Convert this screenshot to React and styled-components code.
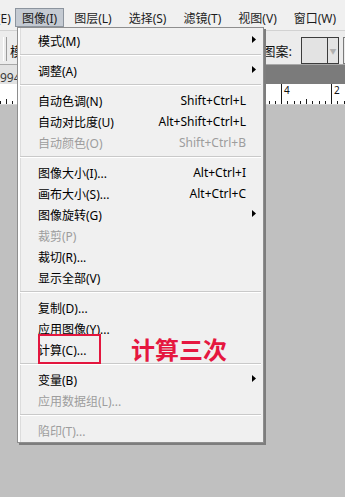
import styled, { createGlobalStyle } from 'styled-components';

const GlobalStyle = createGlobalStyle`
  html, body { margin: 0; padding: 0; }
  body {
    background: #c0c0c0;
    font-family: "Noto Sans", "Noto Sans CJK SC", sans-serif;
    font-size: 12px;
  }
`;

const Window = styled.div`
  position: relative;
  width: 345px;
  height: 497px;
  overflow: hidden;
  background: #c0c0c0;
  display: flex;
  flex-direction: column;
`;

const MenuBar = styled.div`
  height: 31px;
  box-sizing: border-box;
  padding-top: 8px;
  display: flex;
  align-items: flex-start;
  gap: 3px;
  background: #f0f0f0;
  border-bottom: 1px solid #d2d2d2;
  white-space: nowrap;
`;

const MenuTitle = styled.div`
  height: 19px;
  box-sizing: border-box;
  padding: 0 6px;
  display: flex;
  align-items: center;
  color: #1c1c1c;
  border: 1px solid ${(p) => (p.$open ? '#8c949e' : 'transparent')};
  background: ${(p) => (p.$open ? '#c4cad2' : 'transparent')};

  &:first-child {
    margin-left: -34px;
    padding-right: 0;
  }
`;

const OptionsBar = styled.div`
  height: 34px;
  box-sizing: border-box;
  padding: 6px 0 0 3px;
  display: flex;
  align-items: center;
  background: #ececec;
  border-bottom: 1px solid #a8a8a8;
  overflow: hidden;
  white-space: nowrap;
`;

const Grip = styled.div`
  width: 2px;
  height: 24px;
  margin-top: -4px;
  border-left: 1px solid #ffffff;
  border-right: 1px solid #9c9c9c;
  margin-right: 3px;
`;

const OptionLabel = styled.span`
  font-size: 13px;
  color: #111;
  margin-left: ${(p) => (p.$push ? 'auto' : '0')};
  margin-right: ${(p) => p.$gap || 0}px;
`;

const PatternBox = styled.div`
  width: 38px;
  height: 27px;
  box-sizing: border-box;
  display: flex;
  border: 1px solid #3c3c3c;
  background: #e3e3e3;
  margin-right: 4px;
`;

const PatternSwatch = styled.div`
  flex: 1;
`;

const PatternDrop = styled.div`
  width: 10px;
  border-left: 1px solid #3c3c3c;
  display: flex;
  align-items: center;
  justify-content: center;
  color: #b0b0b0;
  font-size: 7px;
`;

const EdgeBox = styled.div`
  width: 10px;
  height: 27px;
  box-sizing: border-box;
  border: 1px solid #7a7a7a;
  border-right: none;
  margin-right: -8px;
`;

const TabBar = styled.div`
  height: 19px;
  display: flex;
  background: #7b7b7b;
`;

const DocTab = styled.div`
  padding: 6px 4px 0 0;
  background: #e2e2e2;
  color: #3a3a3a;
  line-height: 13px;
  white-space: nowrap;
`;

const Ruler = styled.div`
  height: 20px;
  background: #ffffff;
  border-bottom: 1px solid #d4d4d4;

  svg { display: block; }
`;

const Canvas = styled.div`
  flex: 1;
  background: #c0c0c0;
`;

const Menu = styled.div`
  position: absolute;
  left: 17px;
  top: 27px;
  width: 247px;
  box-sizing: border-box;
  padding: 2px 0 1px;
  border: 1px solid #8e8e8e;
  box-shadow: 2px 2px 0 #7d7d7d;
  background: linear-gradient(to right, #ffffff 0 2px, #dcdcdc 2px 3px, #f0f0f0 3px);
  white-space: nowrap;
`;

const Row = styled.div`
  position: relative;
  height: 21px;
  padding-left: 20px;
  display: grid;
  grid-template-columns: 1fr auto 17px;
  align-items: center;
  color: ${(p) => (p.$off ? '#9d9d9d' : '#000000')};
`;

const Shortcut = styled.span`
  text-align: right;
`;

const SubArrow = styled.svg`
  margin-left: 6px;
  margin-top: -3px;
`;

const Separator = styled.div`
  margin: 3px 2px 4px;
  border-top: 1px solid #c9c9c9;
  border-bottom: 1px solid #ffffff;
`;

const MarkBox = styled.span`
  position: absolute;
  left: 20px;
  top: -5px;
  width: 63px;
  height: 30px;
  box-sizing: border-box;
  border: 2px solid #e3163e;
`;

const Note = styled.span`
  position: absolute;
  left: 113px;
  top: 50%;
  transform: translateY(-54%);
  font-family: "Noto Sans CJK SC", sans-serif;
  font-size: 24px;
  font-weight: 700;
  line-height: 1;
  color: #e5173f;
`;

const titles = ['编辑(E)', '图像(I)', '图层(L)', '选择(S)', '滤镜(T)', '视图(V)', '窗口(W)'];

const items = [
  { label: '模式(M)', sub: true },
  'sep',
  { label: '调整(A)', sub: true },
  'sep',
  { label: '自动色调(N)', key: 'Shift+Ctrl+L' },
  { label: '自动对比度(U)', key: 'Alt+Shift+Ctrl+L' },
  { label: '自动颜色(O)', key: 'Shift+Ctrl+B', off: true },
  'sep',
  { label: '图像大小(I)...', key: 'Alt+Ctrl+I' },
  { label: '画布大小(S)...', key: 'Alt+Ctrl+C' },
  { label: '图像旋转(G)', sub: true },
  { label: '裁剪(P)', off: true },
  { label: '裁切(R)...' },
  { label: '显示全部(V)' },
  'sep',
  { label: '复制(D)...' },
  { label: '应用图像(Y)...' },
  { label: '计算(C)...', note: '计算三次' },
  'sep',
  { label: '变量(B)', sub: true },
  { label: '应用数据组(L)...', off: true },
  'sep',
  { label: '陷印(T)...', off: true },
];

function RulerTicks() {
  const lines = [];
  const labels = [];
  for (let i = -8; i < 56; i++) {
    const x = Math.round(31 + i * 6.25) + 0.5;
    if (x < 0 || x > 345) continue;
    let h = 3;
    if (i % 8 === 0) h = 20;
    else if (i % 4 === 0) h = 5;
    lines.push(<line key={i} x1={x} x2={x} y1={20 - h} y2={20} stroke="#1a1a1a" strokeWidth="1" />);
    if (i % 8 === 0) {
      labels.push(
        <text key={'t' + i} x={x + 2.5} y={10} fontSize="10" fill="#111" fontFamily="Noto Sans, sans-serif">
          {2 + (48 - i) / 4}
        </text>
      );
    }
  }
  return (
    <svg width="345" height="20">
      {lines}
      {labels}
    </svg>
  );
}

function Arrow() {
  return (
    <SubArrow width="4" height="7" viewBox="0 0 4 7">
      <path d="M0 0 L4 3.5 L0 7 Z" fill="#000" />
    </SubArrow>
  );
}

export default function App() {
  return (
    <>
      <GlobalStyle />
      <Window>
        <MenuBar>
          {titles.map((t) => (
            <MenuTitle key={t} $open={t === '图像(I)'}>{t}</MenuTitle>
          ))}
        </MenuBar>
        <OptionsBar>
          <Grip />
          <OptionLabel>模式:</OptionLabel>
          <OptionLabel $push $gap={9}>图案:</OptionLabel>
          <PatternBox>
            <PatternSwatch />
            <PatternDrop>▼</PatternDrop>
          </PatternBox>
          <EdgeBox />
        </OptionsBar>
        <TabBar>
          <DocTab>994.jpg @ 100%(RGB/8#)</DocTab>
        </TabBar>
        <Ruler>
          <RulerTicks />
        </Ruler>
        <Canvas />

        <Menu>
          {items.map((it, i) =>
            it === 'sep' ? (
              <Separator key={i} />
            ) : (
              <Row key={i} $off={it.off}>
                <span>{it.label}</span>
                <Shortcut>{it.key}</Shortcut>
                {it.sub ? <Arrow /> : <span />}
                {it.note && (
                  <>
                    <MarkBox />
                    <Note>{it.note}</Note>
                  </>
                )}
              </Row>
            )
          )}
        </Menu>
      </Window>
    </>
  );
}
